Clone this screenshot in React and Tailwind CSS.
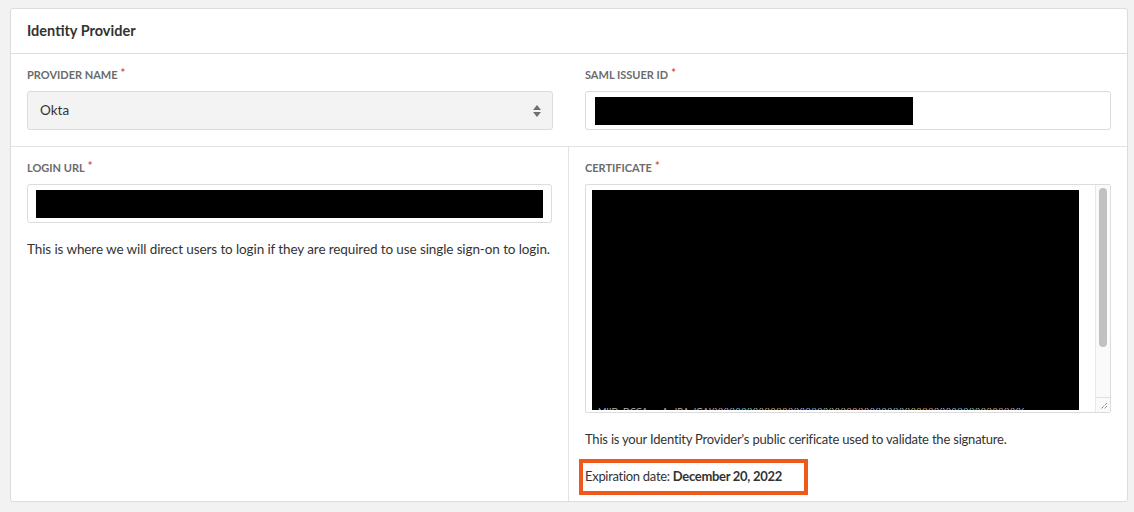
export default function App() {
  const font = { fontFamily: "Lato, 'Noto Sans', sans-serif" }

  const Label = ({ children }) => (
    <div className="flex items-start text-[11px] font-bold uppercase text-[#6b6b6b] leading-[16px] h-[16px] whitespace-nowrap">
      {children}
      <span className="text-[#d9534f] ml-[3px] text-[11px] leading-[12px]">*</span>
    </div>
  )

  return (
    <div className="w-[1134px] h-[512px] bg-[#f2f2f2] pt-[8px] pl-[10px]" style={font}>
      <div className="w-[1118px] h-[494px] bg-white border border-[#dcdcdc] rounded-[3px] flex flex-col">
        <div className="h-[45px] border-b border-[#dedede] flex items-center px-[16px]">
          <h2 className="text-[14.5px] font-bold text-[#333]">Identity Provider</h2>
        </div>

        <div className="grid grid-cols-2 border-b border-[#e3e3e3]">
          <div className="pl-[16px] pr-[16px] pt-[13px] pb-[16px]">
            <Label>Provider name</Label>
            <div className="mt-[8px] h-[39px] bg-[#f3f3f3] border border-[#dcdcdc] rounded-[3px] flex items-center justify-between pl-[12px] pr-[10px]">
              <span className="text-[13.5px] text-[#333]">Okta</span>
              <svg width="10" height="14" viewBox="0 0 10 14">
                <path d="M5 1 L9 6 L1 6 Z" fill="#6f6f6f" />
                <path d="M5 13 L9 8 L1 8 Z" fill="#6f6f6f" />
              </svg>
            </div>
          </div>
          <div className="pl-[16px] pr-[16px] pt-[13px] pb-[16px]">
            <Label>SAML issuer ID</Label>
            <div className="mt-[8px] h-[39px] bg-white border border-[#dcdcdc] rounded-[3px] flex items-center pl-[9px]">
              <div className="w-[318px] h-[28px] bg-black" />
            </div>
          </div>
        </div>

        <div className="grid grid-cols-2 flex-1">
          <div className="pl-[16px] pr-[16px] pt-[13px] border-r border-[#e3e3e3]">
            <Label>Login URL</Label>
            <div className="mt-[8px] h-[39px] bg-white border border-[#dcdcdc] rounded-[3px] flex items-center px-[8px]">
              <div className="w-full h-[28px] bg-black" />
            </div>
            <p className="mt-[16px] text-[13.5px] tracking-[-0.1px] text-[#333] leading-[20px] whitespace-nowrap">
              This is where we will direct users to login if they are required to use single sign-on to login.
            </p>
          </div>
          <div className="pl-[16px] pr-[16px] pt-[13px]">
            <Label>Certificate</Label>
            <div className="mt-[8px] h-[229px] bg-white border border-[#dcdcdc] rounded-[2px] flex overflow-hidden">
              <div className="flex-1 relative pl-[6px] pt-[5px] overflow-hidden">
                <div className="w-[487px] h-[220px] bg-black" />
                <div className="absolute left-[12px] top-[222px] text-[9px] leading-[9px] text-[#b5b5b5] whitespace-nowrap overflow-hidden w-[460px] h-[3px]">
                  MIIDpDCCAoygAwIBAgIGAXXXXXXXXXXXXXXXXXXXXXXXXXXXXXXXXXXXXXXXXXXXXXXXXXXXXXX
                </div>
              </div>
              <div className="w-[15px] bg-[#fafafa] border-l border-[#e8e8e8] flex flex-col">
                <div className="flex-1 pt-[3px] px-[3px]">
                  <div className="h-[159px] bg-[#c1c1c1] rounded-full" />
                </div>
                <div className="h-[15px] border-t border-[#e0e0e0] flex items-end justify-end p-[2px]">
                  <svg width="8" height="8" viewBox="0 0 8 8">
                    <path d="M7 1 L1 7 M7 4 L4 7" stroke="#555" strokeWidth="1" strokeDasharray="1 1" />
                  </svg>
                </div>
              </div>
            </div>
            <p className="mt-[16px] text-[13px] tracking-[-0.2px] text-[#333] leading-[20px] whitespace-nowrap">
              This is your Identity Provider's public cerificate used to validate the signature.
            </p>
            <div className="mt-[10px] -ml-[6px] w-[229px] h-[36px] border-[4px] border-[#ef5a1c] flex items-center pl-[2px]">
              <span className="text-[13px] tracking-[-0.3px] text-[#333] whitespace-nowrap">
                Expiration date: <span className="font-bold">December 20, 2022</span>
              </span>
            </div>
          </div>
        </div>
      </div>
    </div>
  )
}
